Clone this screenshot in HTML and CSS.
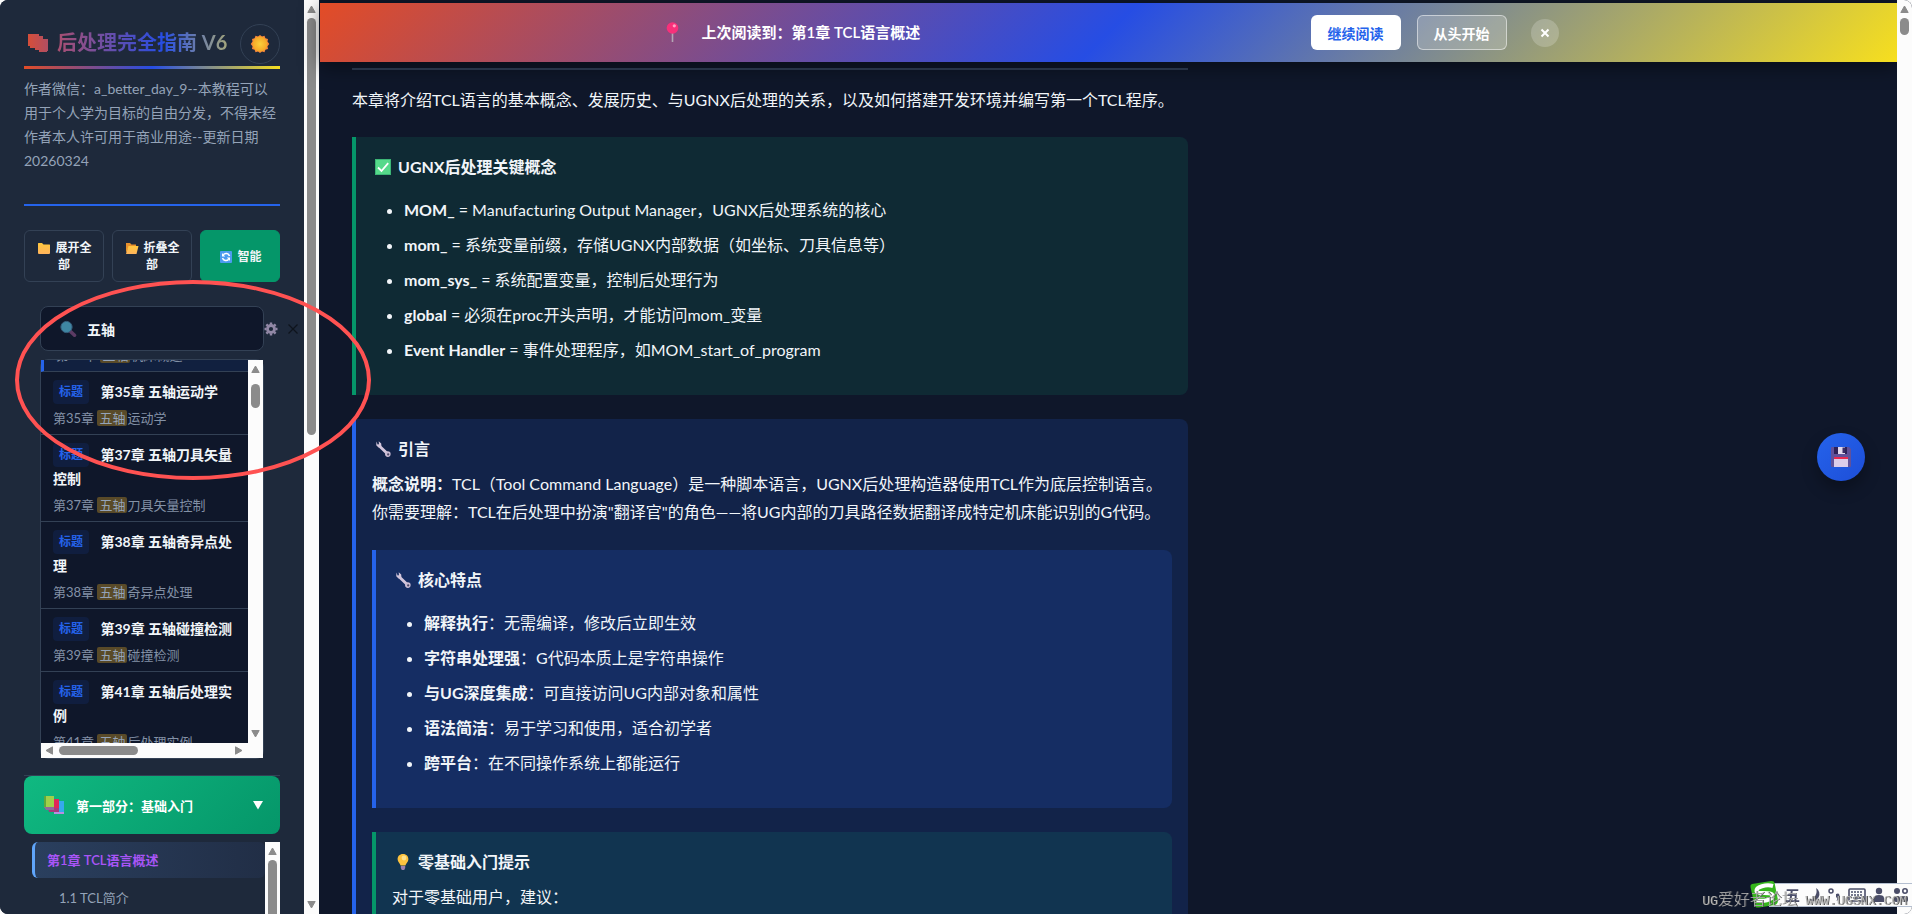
FILE: index.html
```
<!DOCTYPE html>
<html lang="zh-CN">
<head>
    <meta charset="UTF-8">
    <meta name="viewport" content="width=device-width, initial-scale=1.0">
    <title>后处理完全指南 V6</title>
    <link rel="stylesheet" href="styles.css">
</head>
<body>
    <!-- Shared icons -->
    <svg class="icon-defs" width="0" height="0" aria-hidden="true">
        <linearGradient id="brand" x1="0" y1="0" x2="1" y2="0">
            <stop offset="0" stop-color="#d64e39"/>
            <stop offset="1" stop-color="#b14e62"/>
        </linearGradient>
        <radialGradient id="sunFill">
            <stop offset="0" stop-color="#fbd03c"/>
            <stop offset="1" stop-color="#f6a626"/>
        </radialGradient>
        <linearGradient id="folderFill" x1="0" y1="0" x2="0" y2="1">
            <stop offset="0" stop-color="#ffc83d"/>
            <stop offset="1" stop-color="#ffb35c"/>
        </linearGradient>
        <symbol id="wrench" viewBox="0 0 16 16">
            <path d="M5 5.500 L11.500 11.800" stroke="#d3c6dc" stroke-width="2.600" stroke-linecap="round"/>
            <path d="M2.200 1.300 L2 4.600 L4 6.600 L6.600 5.600 L6.400 3 L4.200 1 L4.400 3.700 L3.200 4 Z" fill="#d3c6dc"/>
            <circle cx="12.300" cy="12.500" r="2.500" fill="#cbbcd4"/>
            <circle cx="12.600" cy="12.800" r="1" fill="#4b4868"/>
        </symbol>
        <symbol id="arrow" viewBox="0 0 15 15">
            <path d="M7.500 5 L11.200 11.500 H3.800 Z" fill="#8b8b8b" stroke="#8b8b8b" stroke-linejoin="round"/>
        </symbol>
    </svg>

    <div class="app">
        <aside class="sidebar">
            <div class="sidebar-body">
                <header class="brand">
                    <h1>
                        <svg width="22" height="22" viewBox="0 0 22 22"><path d="M1 3 H12 V5 H16 V8 H21 V20 H20 V21 H12 V19 H8 V17 H3 V15 H1 Z" fill="url(#brand)"/></svg>
                        <span>后处理完全指南 V6</span>
                    </h1>
                    <button class="theme-toggle" aria-label="切换主题">
                        <svg width="20" height="20" viewBox="0 0 20 20"><path d="M10 1 L12 2.500 L14.500 1.800 L15.400 4.200 L18 5 L17.500 7.600 L19.300 10 L17.500 12.200 L18 15 L15.400 15.800 L14.500 18.200 L12 17.500 L10 19 L8 17.500 L5.500 18.200 L4.600 15.800 L2 15 L2.500 12.200 L.700 10 L2.500 7.600 L2 5 L4.600 4.200 L5.500 1.800 L8 2.500 Z" fill="#f8873a"/><circle cx="10" cy="10" r="7.400" fill="url(#sunFill)"/></svg>
                    </button>
                </header>
                <p class="author">作者微信：a_better_day_9--本教程可以用于个人学为目标的自由分发，不得未经作者本人许可用于商业用途--更新日期20260324</p>

                <div class="tools">
                    <button class="tool-btn">
                        <svg width="14" height="14" viewBox="0 0 14 14"><path d="M1 2.500 Q1 2 1.500 2 H5 L6.500 3.500 H12.500 Q13 3.500 13 4 V12 Q13 13 12 13 H2 Q1 13 1 12 Z" fill="url(#folderFill)"/></svg>
                        展开全部
                    </button>
                    <button class="tool-btn">
                        <svg width="14" height="14" viewBox="0 0 14 14"><path d="M1 2 H5 L6.500 3.500 H11 V6 H4 L1 12 Z" fill="#e8912d"/><path d="M3.500 5 H13.500 L11.500 13 H1 Z" fill="url(#folderFill)"/></svg>
                        折叠全部
                    </button>
                    <button class="tool-btn smart">
                        <svg width="14" height="14" viewBox="0 0 14 14"><rect x="1" y="1" width="12" height="12" rx="1" fill="#4c9bf0"/><path d="M10.500 6 A3.600 3.600 0 0 0 4.300 4.700 M3.500 8 A3.600 3.600 0 0 0 9.700 9.300" fill="none" stroke="#fff" stroke-width="1.500"/><path d="M3 3 V6.500 H6.200 Z M11 11 V7.500 H7.800 Z" fill="#fff"/></svg>
                        智能
                    </button>
                </div>

                <div class="search">
                    <div class="search-box">
                        <svg class="search-icon" width="18" height="18" viewBox="0 0 18 18"><path d="M11 11 L15.500 15.200" stroke="#5b3a63" stroke-width="3.600" stroke-linecap="round"/><circle cx="7.500" cy="7" r="5.600" fill="#3f86a3" stroke="#37607f" stroke-width="1"/></svg>
                        <input type="text" id="search" value="五轴" aria-label="搜索">
                    </div>
                    <button class="mini-btn" aria-label="设置">
                        <svg width="14" height="14" viewBox="0 0 14 14"><circle cx="7" cy="7" r="3.500" fill="none" stroke="#9288a6" stroke-width="2.800"/><path d="M7 .500 V2.500 M7 11.500 V13.500 M.500 7 H2.500 M11.500 7 H13.500 M2.400 2.400 L3.800 3.800 M10.200 10.200 L11.600 11.600 M2.400 11.600 L3.800 10.200 M10.200 3.800 L11.600 2.400" stroke="#9288a6" stroke-width="2.400"/></svg>
                    </button>
                    <button class="mini-btn" aria-label="清除">
                        <svg width="10" height="10" viewBox="0 0 10 10"><path d="M.500 .500 L9.500 9.500 M9.500 .500 L.500 9.500" stroke="#0e141c" stroke-width="1.200"/></svg>
                    </button>
                </div>

                <div class="results">
                    <div class="results-view">
                        <div class="result-list">
                            <div class="result active">
                                <div class="result-title"><span class="tag">标题</span> 第34章 五轴机床概述</div>
                                <div class="result-text">第34章 <mark>五轴</mark>机床概述</div>
                            </div>
                            <div class="result">
                                <div class="result-title"><span class="tag">标题</span> 第35章 五轴运动学</div>
                                <div class="result-text">第35章 <mark>五轴</mark>运动学</div>
                            </div>
                            <div class="result">
                                <div class="result-title"><span class="tag">标题</span> 第37章 五轴刀具矢量控制</div>
                                <div class="result-text">第37章 <mark>五轴</mark>刀具矢量控制</div>
                            </div>
                            <div class="result">
                                <div class="result-title"><span class="tag">标题</span> 第38章 五轴奇异点处理</div>
                                <div class="result-text">第38章 <mark>五轴</mark>奇异点处理</div>
                            </div>
                            <div class="result">
                                <div class="result-title"><span class="tag">标题</span> 第39章 五轴碰撞检测</div>
                                <div class="result-text">第39章 <mark>五轴</mark>碰撞检测</div>
                            </div>
                            <div class="result">
                                <div class="result-title"><span class="tag">标题</span> 第41章 五轴后处理实例</div>
                                <div class="result-text">第41章 <mark>五轴</mark>后处理实例</div>
                            </div>
                        </div>
                        <div class="scrollbar results-scroll">
                            <svg width="15" height="15"><use href="#arrow"/></svg>
                            <span class="thumb"></span>
                            <svg class="down" width="15" height="15"><use href="#arrow"/></svg>
                        </div>
                    </div>
                    <div class="scrollbar horizontal">
                        <svg class="left" width="15" height="15"><use href="#arrow"/></svg>
                        <span class="thumb"></span>
                        <svg class="right" width="15" height="15"><use href="#arrow"/></svg>
                    </div>
                </div>

                <nav class="part">
                    <button class="part-header">
                        <svg width="22" height="22" viewBox="0 0 22 22"><path d="M11 7 H21 V20 H11 Z" fill="#35a9ec"/><path d="M11 18 H21 V20 H11 Z" fill="#b78ee0"/><path d="M7 5 H16 V17 H7 Z" fill="#e0265a"/><path d="M5 14 H16 V18 H6 Z" fill="#a73a7c"/><path d="M1 2 H11 V14 H1 Z" fill="#9fd04a"/><path d="M1 2 H3 V14 H1 Z" fill="#5fa83c"/><path d="M1 13 H11 V16 H3 Z" fill="#8d6aa0"/></svg>
                        <span>第一部分：基础入门</span>
                        <svg width="12" height="12" viewBox="0 0 12 12"><path d="M1 2 H11 L6 10.500 Z" fill="#fff"/></svg>
                    </button>
                    <div class="part-body">
                        <div class="chapters">
                            <a class="chapter" href="#ch1">第1章 TCL语言概述</a>
                            <a class="sub-chapter" href="#ch1-1">1.1 TCL简介</a>
                        </div>
                        <div class="scrollbar nav-scroll">
                            <svg width="15" height="15"><use href="#arrow"/></svg>
                            <span class="thumb"></span>
                        </div>
                    </div>
                </nav>
            </div>
            <div class="scrollbar sidebar-scroll">
                <svg width="15" height="15"><use href="#arrow"/></svg>
                <span class="thumb"></span>
                <svg class="down" width="15" height="15"><use href="#arrow"/></svg>
            </div>
        </aside>

        <main class="main">
            <div class="resume-bar">
                <div class="resume-inner">
                    <svg width="27" height="27" viewBox="0 0 27 27"><path d="M13.500 13 V23" stroke="#b3a6b5" stroke-width="1.600"/><circle cx="13.500" cy="9" r="5.800" fill="#f8307a"/><circle cx="15.300" cy="6.800" r="1.600" fill="#ffa3c4"/></svg>
                    <span class="resume-text">上次阅读到：第1章 TCL语言概述</span>
                    <button class="resume-btn primary">继续阅读</button>
                    <button class="resume-btn">从头开始</button>
                    <button class="resume-close" aria-label="关闭">
                        <svg width="10" height="10" viewBox="0 0 10 10"><path d="M1.500 1.500 L8.500 8.500 M8.500 1.500 L1.500 8.500" stroke="#fff" stroke-width="2"/></svg>
                    </button>
                </div>
            </div>

            <article class="content" id="ch1">
                <p class="lead">本章将介绍TCL语言的基本概念、发展历史、与UGNX后处理的关系，以及如何搭建开发环境并编写第一个TCL程序。</p>

                <section class="card tip">
                    <h4><svg width="18" height="18" viewBox="0 0 18 18"><rect x="1" y="1" width="16" height="16" fill="#3cb676"/><rect x="2" y="2" width="14" height="14" fill="#56d98a"/><path d="M4 9.500 L7.500 13 L14.200 5.200" fill="none" stroke="#fff" stroke-width="1.800"/></svg>UGNX后处理关键概念</h4>
                    <ul>
                        <li><strong>MOM_</strong> = Manufacturing Output Manager，UGNX后处理系统的核心</li>
                        <li><strong>mom_</strong> = 系统变量前缀，存储UGNX内部数据（如坐标、刀具信息等）</li>
                        <li><strong>mom_sys_</strong> = 系统配置变量，控制后处理行为</li>
                        <li><strong>global</strong> = 必须在proc开头声明，才能访问mom_变量</li>
                        <li><strong>Event Handler</strong> = 事件处理程序，如MOM_start_of_program</li>
                    </ul>
                </section>

                <section class="card info" id="ch1-1">
                    <h4><svg width="18" height="18"><use href="#wrench"/></svg>引言</h4>
                    <p><strong>概念说明：</strong>TCL（Tool Command Language）是一种脚本语言，UGNX后处理构造器使用TCL作为底层控制语言。<br>你需要理解：TCL在后处理中扮演"翻译官"的角色——将UG内部的刀具路径数据翻译成特定机床能识别的G代码。</p>

                    <div class="card info">
                        <h4><svg width="18" height="18"><use href="#wrench"/></svg>核心特点</h4>
                        <ul>
                            <li><strong>解释执行</strong>：无需编译，修改后立即生效</li>
                            <li><strong>字符串处理强</strong>：G代码本质上是字符串操作</li>
                            <li><strong>与UG深度集成</strong>：可直接访问UG内部对象和属性</li>
                            <li><strong>语法简洁</strong>：易于学习和使用，适合初学者</li>
                            <li><strong>跨平台</strong>：在不同操作系统上都能运行</li>
                        </ul>
                    </div>

                    <div class="card tip">
                        <h4><svg width="18" height="18" viewBox="0 0 18 18"><path d="M9 1 C5.500 1 3.600 3.500 3.600 6.200 C3.600 9 6 10 6.600 12.600 H11.400 C12 10 14.400 9 14.400 6.200 C14.400 3.500 12.500 1 9 1 Z" fill="#fdc23e"/><circle cx="10" cy="5" r="2.400" fill="#ffe08a"/><path d="M6.800 13 H11.200 V15 L10.200 17 H7.800 L6.800 15 Z" fill="#9b7fae"/></svg>零基础入门提示</h4>
                        <p>对于零基础用户，建议：</p>
                    </div>
                </section>
            </article>
        </main>
        <div class="scrollbar page-scroll">
            <svg width="15" height="15"><use href="#arrow"/></svg>
            <span class="thumb"></span>
        </div>
    </div>

    <button class="save-btn" aria-label="保存">
        <svg width="22" height="22" viewBox="0 0 22 22"><path d="M1 2 Q1 1 2 1 H19 L21 3 V20 Q21 21 20 21 H2 Q1 21 1 20 Z" fill="#61519a"/><path d="M4 1 H17 V8 H4 Z" fill="#2e2259"/><path d="M8 1 H15 V8 H8 Z" fill="#e2d9ee"/><path d="M12.500 1.500 H15 V7 H12.500 Z" fill="#3a2c66"/><path d="M4 11 H18 V13 H4 Z" fill="#e92a50"/><path d="M4 13 H18 V21 H4 Z" fill="#dccdea"/></svg>
    </button>

    <!-- Hand-drawn marker around the search -->
    <svg class="marker" width="360" height="206" viewBox="0 0 360 206"><ellipse cx="180" cy="103" rx="176" ry="98" fill="none" stroke="#ff5252" stroke-width="4"/></svg>

    <!-- Input method bar -->
    <div class="ime">
        <svg class="ime-logo" width="30" height="28" viewBox="0 0 30 28"><path d="M3 4 L22 1 Q25 .500 25.600 3 L29 20 Q29 24 26 25 L10 27.500 Q6 28 5.500 25 L1.500 7 Q1 4.500 3 4 Z" fill="#36b51d"/><path d="M24 6 C17 4 7 7 7.500 11 C8 15 23 11 23.500 15.500 C24 20 13 22 8 20" fill="none" stroke="#fff" stroke-width="4"/></svg>
        <span class="ime-mode">五</span>
        <svg width="18" height="18" viewBox="0 0 18 18"><path d="M12 2 A9 9 0 0 1 5 14 A6.500 6.500 0 1 0 12 2 Z" fill="#4a4d68"/></svg>
        <svg width="18" height="18" viewBox="0 0 18 18"><circle cx="5" cy="5" r="2" fill="none" stroke="#4a4d68" stroke-width="1.500"/><path d="M10 8 Q14 6 13.500 11 Q13 14 10.500 15 Q12 12 10 11 Z" fill="#4a4d68"/></svg>
        <svg width="18" height="18" viewBox="0 0 18 18"><rect x="1" y="3" width="16" height="12" rx="1" fill="none" stroke="#4a4d68" stroke-width="1.600"/><path d="M3 6 H15 M3 9 H15" stroke="#4a4d68" stroke-width="1.600" stroke-dasharray="2 1"/><path d="M5 12 H13" stroke="#4a4d68" stroke-width="1.600"/></svg>
        <svg width="18" height="18" viewBox="0 0 18 18"><circle cx="9" cy="5" r="3.200" fill="#4a4d68"/><path d="M4 16 V12 Q4 9 9 9 Q14 9 14 12 V16 Z" fill="#4a4d68"/></svg>
        <svg width="18" height="18" viewBox="0 0 18 18"><circle cx="5" cy="5" r="3" fill="#4a4d68"/><circle cx="13" cy="5" r="2.200" fill="none" stroke="#4a4d68" stroke-width="1.600"/><rect x="2" y="10" width="6" height="6" rx="2" fill="#4a4d68"/><rect x="10" y="10" width="6" height="6" rx="2" fill="#4a4d68"/></svg>
    </div>
    <div class="watermark">UG<span>爱好者论坛</span> WWW.UGSNX.COM</div>
</body>
</html>
```
FILE: styles.css
```
* {
    box-sizing: border-box;
    margin: 0;
    padding: 0;
}

html {
    background: #fcfcfc;
}

body {
    height: 100vh;
    overflow: hidden;
    font-family: Lato, "Noto Sans CJK SC", sans-serif;
    font-size: 16px;
    line-height: 27px;
    color: #f1f5f9;
}

button {
    font-family: inherit;
    border: none;
    background: none;
    cursor: pointer;
}

.icon-defs {
    position: absolute;
}

.app {
    display: flex;
    height: 100vh;
    background: #0f172a;
    border-radius: 8px;
    overflow: hidden;
}

/* Scrollbars */
.scrollbar {
    display: flex;
    flex-direction: column;
    align-items: center;
    flex: none;
    width: 15px;
    padding: 1px 0 1px;
    background: #fcfcfc;
}

.scrollbar svg {
    flex: none;
}

.scrollbar .thumb {
    width: 9px;
    margin-top: 2px;
    border-radius: 5px;
    background: #8b8b8b;
}

.scrollbar .down {
    margin-top: auto;
    transform: rotate(180deg);
}

.scrollbar.horizontal {
    flex-direction: row;
    width: 100%;
    height: 15px;
    padding: 0 16px 0 0;
}

.scrollbar.horizontal .thumb {
    width: 79px;
    height: 9px;
    margin: 0 0 0 3px;
}

.scrollbar .left {
    transform: rotate(-90deg);
}

.scrollbar .right {
    margin-left: auto;
    transform: rotate(90deg);
}

.sidebar-scroll .thumb {
    height: 417px;
}

.results-scroll .thumb {
    height: 24px;
    margin-top: 8px;
}

.nav-scroll .thumb {
    height: 100px;
}

.page-scroll .thumb {
    height: 17px;
}

/* Sidebar */
.sidebar {
    display: flex;
    flex: none;
    width: 320px;
    background: #1e293b;
    border-right: 1px solid #0f172a;
}

.sidebar-body {
    flex: 1;
    min-width: 0;
    padding: 24px 24px 0;
}

.brand {
    display: flex;
    align-items: flex-start;
    justify-content: space-between;
    height: 45px;
    border-bottom: 3px solid;
    border-image: linear-gradient(90deg, #e34c26, #264de4, #f7df1e) 1;
}

.brand h1 {
    display: flex;
    align-items: center;
    gap: 8px;
    padding-left: 3px;
    font-size: 20px;
    line-height: 36px;
}

.brand h1 span {
    background: linear-gradient(90deg, #a94f70, #264de4 62%, #a3a57c);
    -webkit-background-clip: text;
    background-clip: text;
    color: transparent;
}

.theme-toggle {
    display: flex;
    align-items: center;
    justify-content: center;
    width: 40px;
    height: 40px;
    border: 1px solid #334155;
    border-radius: 50%;
}

.author {
    padding: 8px 0 31px;
    border-bottom: 2px solid #2563eb;
    font-size: 14px;
    line-height: 24px;
    color: #94a3b8;
}

.tools {
    display: grid;
    grid-template-columns: repeat(3, 1fr);
    gap: 8px;
    margin: 24px 0;
}

.tool-btn {
    height: 52px;
    padding: 0 8px;
    border: 1px solid #334155;
    border-radius: 6px;
    font-size: 12px;
    font-weight: bold;
    line-height: 17px;
    color: #f1f5f9;
}

.tool-btn svg {
    margin-right: 2px;
    vertical-align: -3px;
}

.tool-btn.smart {
    background: #059669;
    border-color: #059669;
}

.search {
    display: flex;
    align-items: center;
    margin-left: 16px;
}

.search-box {
    position: relative;
    flex: 0 0 224px;
}

.search-icon {
    position: absolute;
    top: 14px;
    left: 19px;
}

.search-box input {
    display: block;
    width: 100%;
    height: 45px;
    padding: 0 16px 0 46px;
    border: 1px solid #334155;
    border-radius: 8px;
    background: #0f172a;
    font-family: inherit;
    font-size: 14px;
    font-weight: 600;
    color: #f1f5f9;
}

.mini-btn {
    display: flex;
    flex: none;
    margin-right: 10px;
}

.results {
    width: 224px;
    margin: 8px 16px 16px;
    border: 1px solid #334155;
    border-radius: 8px;
    background: #0f172a;
}

.results-view {
    display: flex;
    height: 383px;
    overflow: hidden;
}

.result-list {
    flex: 1;
    margin-top: -51px;
}

.result {
    padding: 8px 12px 6px;
    border-bottom: 1px solid #334155;
}

.result.active {
    border-left: 3px solid #2563eb;
    background: #11203f;
}

.result-title {
    font-size: 14px;
    font-weight: bold;
    line-height: 24px;
}

.tag {
    display: inline-block;
    margin-right: 8px;
    padding: 0 6px;
    border-radius: 4px;
    background: #101e3f;
    font-size: 12px;
    line-height: 24px;
    color: #2563eb;
    vertical-align: top;
}

.result-text {
    margin-top: 4px;
    font-size: 13px;
    line-height: 20px;
    white-space: nowrap;
    color: #8391a6;
}

.result-text mark {
    padding: 0 2px;
    border-radius: 2px;
    background: #594a28;
    color: #94a3b8;
}

.part {
    border-top: 1px solid #334155;
}

.part-header {
    display: flex;
    align-items: center;
    gap: 11px;
    width: 100%;
    height: 58px;
    padding: 0 16px 0 19px;
    border-radius: 8px;
    background: linear-gradient(135deg, #10b981, #059669);
    font-size: 13px;
    font-weight: bold;
    color: #fff;
}

.part-header span {
    flex: 1;
    text-align: left;
}

.part-body {
    display: flex;
    height: 200px;
    margin: 8px 0 0 8px;
}

.chapters {
    flex: 1;
}

.chapter {
    display: block;
    padding: 0 12px;
    border-left: 3px solid #60a5fa;
    border-radius: 6px;
    background: linear-gradient(90deg, #2a3f5e, #212e46);
    font-size: 13px;
    font-weight: 600;
    line-height: 36px;
    color: #a855f7;
    text-decoration: none;
}

.sub-chapter {
    display: block;
    padding: 8px 27px;
    font-size: 13px;
    line-height: 24px;
    color: #94a3b8;
    text-decoration: none;
}

/* Main area */
.main {
    flex: 1;
    min-width: 0;
    padding-top: 3px;
}

.resume-bar {
    height: 59px;
    background: linear-gradient(135deg, #e34c26, #264de4, #f7df1e);
    box-shadow: 0 4px 20px rgba(0, 0, 0, 0.5);
}

.resume-inner {
    display: flex;
    align-items: center;
    max-width: 900px;
    height: 100%;
    margin: 0 auto;
}

.resume-text {
    flex: 1;
    margin-left: 16px;
    font-size: 15px;
    font-weight: 600;
    color: #fff;
}

.resume-btn {
    width: 90px;
    height: 35px;
    margin-right: 16px;
    border: 1px solid rgba(255, 255, 255, 0.5);
    border-radius: 6px;
    background: rgba(255, 255, 255, 0.2);
    font-size: 14px;
    font-weight: 600;
    color: #fff;
}

.resume-btn.primary {
    background: #fff;
    color: #2563eb;
}

.resume-close {
    display: flex;
    align-items: center;
    justify-content: center;
    width: 28px;
    height: 28px;
    margin-left: 8px;
    border-radius: 50%;
    background: rgba(255, 255, 255, 0.2);
}

.content {
    max-width: 900px;
    padding: 6px 32px;
}

.lead {
    margin-bottom: 24px;
    padding-top: 16px;
    border-top: 2px solid #273347;
}

.card {
    margin: 24px 0;
    padding: 16px;
    border-left: 4px solid;
    border-radius: 0 8px 8px 0;
}

.card.tip {
    border-color: #059669;
    background: rgba(16, 185, 129, 0.12);
}

.card.info {
    border-color: #2563eb;
    background: rgba(37, 99, 235, 0.16);
}

.card h4 {
    display: flex;
    align-items: center;
    gap: 6px;
    margin-bottom: 8px;
    padding-left: 2px;
    font-size: 16px;
}

.card p {
    line-height: 28px;
}

.card ul {
    margin: 16px 0;
    padding-left: 32px;
}

.card li + li {
    margin-top: 8px;
}

.save-btn {
    position: fixed;
    top: 50%;
    right: 47px;
    display: flex;
    align-items: center;
    justify-content: center;
    width: 48px;
    height: 48px;
    margin-top: -24px;
    border-radius: 50%;
    background: linear-gradient(135deg, #2563eb, #1d4ed8);
    box-shadow: 0 8px 16px rgba(0, 0, 0, 0.3);
}

/* Things that float above the page */
.marker {
    position: absolute;
    top: 277px;
    left: 13px;
    pointer-events: none;
}

.ime {
    position: fixed;
    right: 0;
    bottom: 7px;
    display: flex;
    align-items: center;
    gap: 4px;
    height: 24px;
    padding-right: 2px;
    border: 1px solid #b4bfd0;
    border-width: 1px 0;
    background: #fcfcfc;
}

.ime-logo {
    margin: 0 2px 2px -20px;
}

.ime-mode {
    font-size: 15px;
    font-weight: bold;
    color: #4a4d68;
}

.watermark {
    position: fixed;
    right: 5px;
    bottom: 0;
    font-family: "Liberation Mono", "Noto Sans CJK SC", monospace;
    font-size: 13px;
    line-height: 24px;
    color: #b4b4b4;
    text-shadow: 1px 0 0 #555;
    white-space: pre;
}

.watermark span {
    font-size: 16px;
    font-weight: 300;
}
```
